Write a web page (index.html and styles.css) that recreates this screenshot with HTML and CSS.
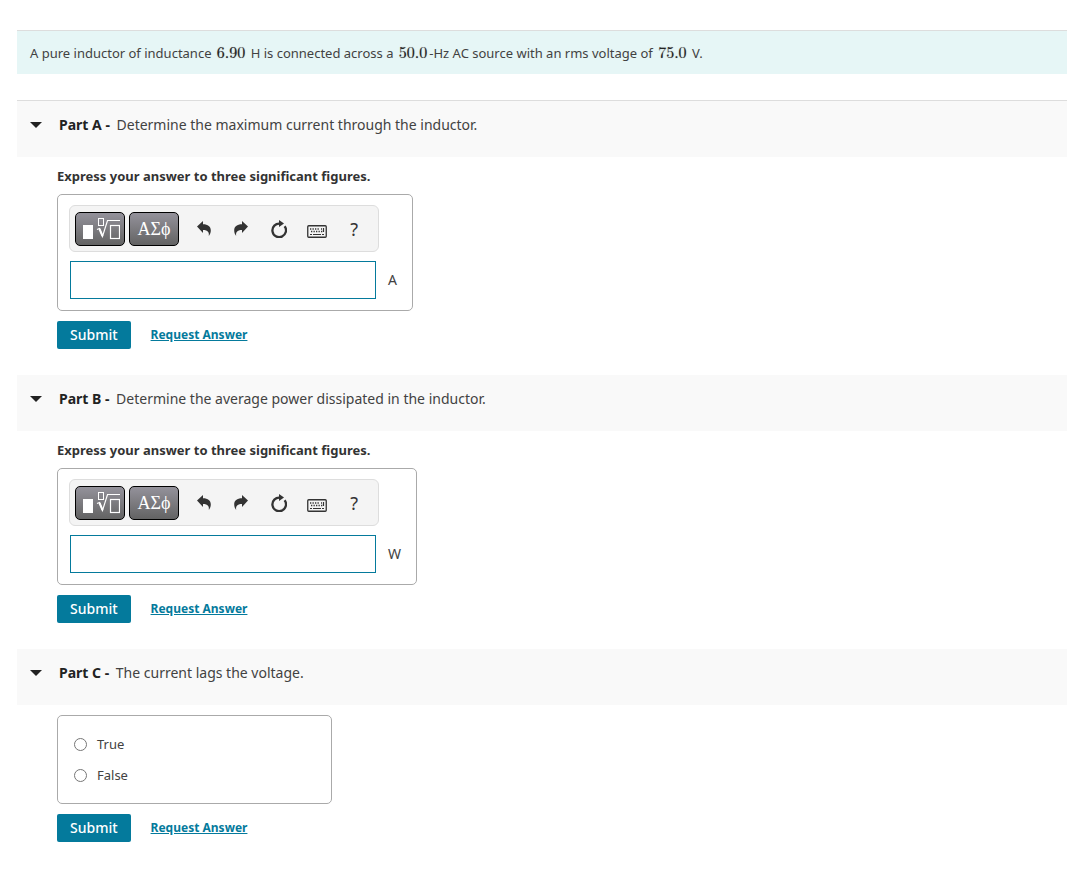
FILE: index.html
```html
<!DOCTYPE html>
<html lang="en">
<head>
    <meta charset="UTF-8">
    <meta name="viewport" content="width=device-width, initial-scale=1.0">
    <title>Inductor in an AC Circuit</title>
    <link rel="stylesheet" href="styles.css">
</head>
<body>
    <!-- shared icons -->
    <svg class="sprite" aria-hidden="true">
        <symbol id="icon-root" viewBox="0 0 38 22">
            <rect x="1" y="7" width="10" height="14" fill="#fff"/>
            <rect x="16.500" y="0.500" width="5" height="7" fill="none" stroke="#fff"/>
            <path d="M15 11.500l2.500-1 3 8 5-16H38" fill="none" stroke="#fff" stroke-width="1.200"/>
            <path d="M17.500 11l3 7" stroke="#fff" stroke-width="2"/>
            <rect x="28.500" y="7.500" width="9" height="13" fill="none" stroke="#fff" stroke-width="1.200"/>
        </symbol>
        <symbol id="icon-undo" viewBox="0 0 14 15">
            <path d="M0 5.500L6 0v3.200c5 0 7.800 2.500 7.800 6 0 2-.5 3.800-2 5.800.6-3.500-.8-6-5.800-6v3z" fill="#333"/>
        </symbol>
        <symbol id="icon-redo" viewBox="0 0 14 15">
            <path d="M14 5.500L8 0v3.200C3 3.200.2 5.700.2 9.200c0 2 .5 3.800 2 5.800C1.600 11.500 3 9 8 9v3z" fill="#333"/>
        </symbol>
        <symbol id="icon-reset" viewBox="0 0 16 18">
            <path d="M9 3.600A6.800 6.800 0 1 0 13.600 6.200" fill="none" stroke="#333" stroke-width="2.300"/>
            <path d="M8 0l5 3.500-5 3.500z" fill="#333"/>
        </symbol>
        <symbol id="icon-keyboard" viewBox="0 0 20 13">
            <rect x="0.750" y="0.750" width="18.500" height="11.500" rx="1" fill="none" stroke="#333" stroke-width="1.300"/>
            <path d="M3 4h10M14 4h1" stroke="#333" stroke-width="1.400" stroke-dasharray="1.300 1.200"/>
            <path d="M4 6.500h9M14 6.500h2" stroke="#333" stroke-width="1.400" stroke-dasharray="1.300 1.200"/>
            <path d="M3 9.500h2M6 9.500h8M15 9.500h2M16.500 3v4" stroke="#333" stroke-width="1.200"/>
        </symbol>
    </svg>

    <main>
        <p class="problem">A pure inductor of inductance <span class="math">6.90</span> H is connected across a <span class="math">50.0</span>-Hz AC source with an rms voltage of <span class="math">75.0</span> V.</p>

        <section class="part">
            <header class="part-header">
                <button type="button" class="toggle" aria-label="Toggle Part A"></button>
                <h2><strong>Part A -</strong> Determine the maximum current through the inductor.</h2>
            </header>
            <form class="part-body">
                <label class="instructions" for="answer-a">Express your answer to three significant figures.</label>
                <div class="answer-box">
                    <div class="toolbar">
                        <div class="palettes">
                            <button type="button" class="palette" aria-label="Templates"><svg class="root"><use href="#icon-root"/></svg></button>
                            <button type="button" class="palette">ΑΣϕ</button>
                        </div>
                        <button type="button" class="tool" aria-label="Undo"><svg width="14" height="15"><use href="#icon-undo"/></svg></button>
                        <button type="button" class="tool" aria-label="Redo"><svg width="14" height="15"><use href="#icon-redo"/></svg></button>
                        <button type="button" class="tool" aria-label="Reset"><svg width="16" height="18"><use href="#icon-reset"/></svg></button>
                        <button type="button" class="tool" aria-label="Keyboard shortcuts"><svg class="keyboard"><use href="#icon-keyboard"/></svg></button>
                        <button type="button" class="tool">?</button>
                    </div>
                    <div class="answer-row">
                        <input type="text" id="answer-a" class="answer">
                        <span>A</span>
                    </div>
                </div>
                <div class="actions">
                    <button type="submit" class="submit">Submit</button>
                    <a href="#">Request Answer</a>
                </div>
            </form>
        </section>

        <section class="part">
            <header class="part-header">
                <button type="button" class="toggle" aria-label="Toggle Part B"></button>
                <h2><strong>Part B -</strong> Determine the average power dissipated in the inductor.</h2>
            </header>
            <form class="part-body">
                <label class="instructions" for="answer-b">Express your answer to three significant figures.</label>
                <div class="answer-box">
                    <div class="toolbar">
                        <div class="palettes">
                            <button type="button" class="palette" aria-label="Templates"><svg class="root"><use href="#icon-root"/></svg></button>
                            <button type="button" class="palette">ΑΣϕ</button>
                        </div>
                        <button type="button" class="tool" aria-label="Undo"><svg width="14" height="15"><use href="#icon-undo"/></svg></button>
                        <button type="button" class="tool" aria-label="Redo"><svg width="14" height="15"><use href="#icon-redo"/></svg></button>
                        <button type="button" class="tool" aria-label="Reset"><svg width="16" height="18"><use href="#icon-reset"/></svg></button>
                        <button type="button" class="tool" aria-label="Keyboard shortcuts"><svg class="keyboard"><use href="#icon-keyboard"/></svg></button>
                        <button type="button" class="tool">?</button>
                    </div>
                    <div class="answer-row">
                        <input type="text" id="answer-b" class="answer">
                        <span>W</span>
                    </div>
                </div>
                <div class="actions">
                    <button type="submit" class="submit">Submit</button>
                    <a href="#">Request Answer</a>
                </div>
            </form>
        </section>

        <section class="part">
            <header class="part-header">
                <button type="button" class="toggle" aria-label="Toggle Part C"></button>
                <h2><strong>Part C -</strong> The current lags the voltage.</h2>
            </header>
            <form class="part-body">
                <div class="choices">
                    <label><input type="radio" name="lags" value="true">True</label>
                    <label><input type="radio" name="lags" value="false">False</label>
                </div>
                <div class="actions">
                    <button type="submit" class="submit">Submit</button>
                    <a href="#">Request Answer</a>
                </div>
            </form>
        </section>
    </main>

    <script>
        document.querySelectorAll('.toggle').forEach(button => {
            button.addEventListener('click', () => {
                button.closest('.part').classList.toggle('closed');
            });
        });

        document.querySelectorAll('form').forEach(form => {
            form.addEventListener('submit', (e) => e.preventDefault());
        });
    </script>
</body>
</html>
```

FILE: styles.css
```css
* {
    box-sizing: border-box;
}
body {
    font-family: "Segoe UI", "Noto Sans", sans-serif;
    font-size: 13px;
    line-height: 20px;
    margin: 0;
    color: #424242;
    background: white;
}
main {
    padding: 30px 16px 30px 17px;
}
button, input {
    font: inherit;
    margin: 0;
}
.sprite {
    display: none;
}
.problem {
    margin: 0 0 26px;
    padding: 12px 13px 11px;
    border-top: 1px solid #ddd;
    background: #e6f6f6;
}
.math {
    margin: 0 2px;
    font-family: "Latin Modern Roman", "Liberation Serif", serif;
    font-size: 16px;
    line-height: 16px;
    color: #222;
    text-shadow: 0 0 1px #888;
}
.part {
    margin-bottom: 26px;
}
.part-header {
    display: flex;
    align-items: center;
    gap: 17px;
    padding: 14px 13px 22px;
    background: #f9f9f9;
}
.part:first-of-type .part-header {
    border-top: 1px solid #ddd;
}
.toggle {
    width: 12px;
    height: 20px;
    padding: 0;
    border: none;
    background: none;
    cursor: pointer;
}
.toggle::before {
    content: "";
    display: block;
    border: 6px solid transparent;
    border-top-color: #222;
    border-bottom: none;
}
h2 {
    margin: 0;
    font-size: 14px;
    font-weight: normal;
    line-height: 20px;
}
h2 strong {
    margin-right: 3px;
    color: #222;
}
.part-body {
    padding: 10px 0 0 40px;
}
.closed .part-body {
    display: none;
}
.instructions {
    display: block;
    margin-bottom: 9px;
    font-weight: bold;
    line-height: 18px;
    color: #333;
}
.answer-box {
    width: fit-content;
    padding: 10px 15px 11px 11px;
    border: 1px solid #aaa;
    border-radius: 5px;
}
.toolbar {
    display: flex;
    align-items: center;
    width: 310px;
    height: 47px;
    padding: 0 5px;
    border: 1px solid #ddd;
    border-radius: 6px;
    background: #f4f4f4;
}
.palettes {
    display: flex;
    gap: 4px;
    margin-right: 6px;
}
.palette {
    display: flex;
    align-items: center;
    justify-content: center;
    width: 50px;
    height: 34px;
    padding: 0;
    border: 1px solid #000;
    border-radius: 5px;
    background: linear-gradient(#94929b, #636363);
    color: white;
    font-family: "Liberation Serif", serif;
    font-size: 18px;
}
.root {
    width: 38px;
    height: 22px;
    margin-left: 2px;
}
.tool {
    display: flex;
    align-items: center;
    justify-content: center;
    width: 38px;
    height: 34px;
    padding: 0;
    border: none;
    background: none;
    color: #333;
    font-size: 18px;
}
.keyboard {
    width: 20px;
    height: 13px;
    margin-top: 5px;
}
.answer-row {
    display: flex;
    align-items: center;
    gap: 12px;
    margin: 9px 0 0 1px;
    font-size: 14px;
}
.answer {
    width: 306px;
    height: 38px;
    padding: 0 8px;
    border: 1px solid #047a9c;
    background: white;
}
.actions {
    display: flex;
    align-items: center;
    gap: 20px;
    margin-top: 10px;
}
.submit {
    height: 28px;
    padding: 0 13px;
    border: none;
    border-radius: 2px;
    background: #047a9c;
    color: white;
    font-size: 14px;
    font-weight: 500;
    cursor: pointer;
}
.actions a {
    color: #047a9c;
    font-size: 12px;
    font-weight: bold;
}
.choices {
    display: flex;
    flex-direction: column;
    gap: 11px;
    width: 275px;
    padding: 18px 16px;
    border: 1px solid #aaa;
    border-radius: 5px;
}
.choices label {
    display: flex;
    align-items: center;
    gap: 10px;
}
.choices input {
    width: 13px;
    height: 13px;
}
```
